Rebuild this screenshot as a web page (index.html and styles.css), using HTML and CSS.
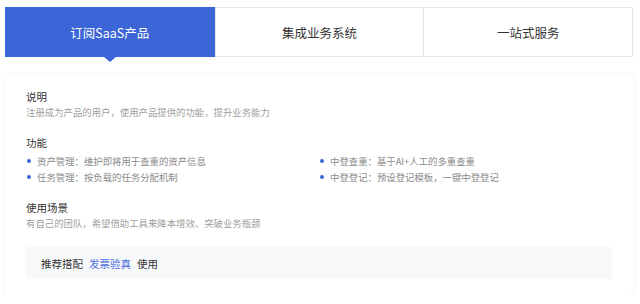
FILE: index.html
```html
<!DOCTYPE html>
<html lang="zh-CN">
<head>
  <meta charset="UTF-8">
  <meta name="viewport" content="width=device-width, initial-scale=1.0">
  <title>产品介绍</title>
  <link rel="stylesheet" href="styles.css">
</head>
<body>

  <!-- Tabs -->
  <div class="tabs">
    <div class="tab active">订阅SaaS产品</div>
    <div class="tab">集成业务系统</div>
    <div class="tab">一站式服务</div>
  </div>

  <!-- Panel -->
  <div class="panel">
    <div class="section">
      <h3>说明</h3>
      <p class="desc">注册成为产品的用户，使用产品提供的功能，提升业务能力</p>
    </div>

    <div class="section">
      <h3>功能</h3>
      <ul class="features">
        <li>资产管理：维护即将用于查重的资产信息</li>
        <li>中登查重：基于AI+人工的多重查重</li>
        <li>任务管理：按负载的任务分配机制</li>
        <li>中登登记：预设登记模板，一键中登登记</li>
      </ul>
    </div>

    <div class="section">
      <h3>使用场景</h3>
      <p class="desc">有自己的团队，希望借助工具来降本增效、突破业务瓶颈</p>
    </div>

    <div class="recommend">
      <span>推荐搭配</span>
      <a href="#">发票验真</a>
      <span>使用</span>
    </div>
  </div>

</body>
</html>
```

FILE: styles.css
```css
/* Reset & base */
* {
  margin: 0;
  padding: 0;
  box-sizing: border-box;
}

body {
  font-family: "Noto Sans CJK SC", "Noto Sans", sans-serif;
  background: #fff;
  color: #333;
  padding: 7px 7px 0 5px;
}

/* Tabs */
.tabs {
  display: grid;
  grid-template-columns: repeat(3, 1fr);
  border: 1px solid #e6e6e6;
  height: 50px;
}

.tab {
  display: flex;
  align-items: center;
  justify-content: center;
  font-size: 12.5px;
  color: #333;
  border-left: 1px solid #e6e6e6;
  position: relative;
}

.tab:first-child {
  border-left: none;
}

.tab.active {
  background: #3c66d8;
  color: #fff;
  margin: -1px 0 -1px -1px;
}

.tab.active::after {
  content: "";
  position: absolute;
  left: 50%;
  bottom: -5px;
  margin-left: -6px;
  border-left: 6px solid transparent;
  border-right: 6px solid transparent;
  border-top: 5px solid #3c66d8;
}

/* Panel */
.panel {
  margin-top: 18px;
  background: #fff;
  border-radius: 5px;
  box-shadow: 0 1px 6px rgba(0, 0, 0, 0.07);
  padding: 15px 21px 15px;
}

.section {
  margin-bottom: 16px;
}

.section h3 {
  font-size: 10.5px;
  font-weight: normal;
  color: #333;
  line-height: 14px;
}

.desc {
  font-size: 9.4px;
  color: #a0a0a0;
  line-height: 16px;
}

.features {
  list-style: none;
  display: grid;
  grid-template-columns: 1fr 1fr;
  margin-top: 3px;
}

.features li {
  font-size: 9.4px;
  color: #8a8a8a;
  line-height: 16px;
  display: flex;
  align-items: center;
}

.features li::before {
  content: "";
  width: 4px;
  height: 4px;
  border-radius: 50%;
  background: #3c66d8;
  margin: 0 6px 0 1px;
}

.recommend {
  background: #f7f8fa;
  height: 32px;
  display: flex;
  align-items: center;
  gap: 6px;
  padding-left: 15px;
  font-size: 10.5px;
  color: #333;
}

.recommend a {
  color: #4a6fe0;
  text-decoration: none;
}
```
